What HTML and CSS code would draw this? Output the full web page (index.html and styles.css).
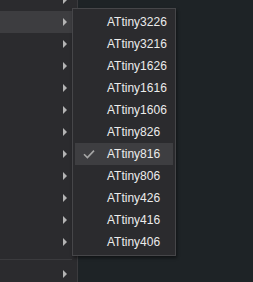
FILE: index.html
```
<!DOCTYPE html>
<html>
  <head>
    <title>Board menu</title>
    <link rel="stylesheet" href="styles.css">
  </head>
  <body>
    <nav class="menu">
      <div class="row"><span class="arrow"></span></div>
      <div class="row active"><span class="arrow"></span></div>
      <div class="row"><span class="arrow"></span></div>
      <div class="row"><span class="arrow"></span></div>
      <div class="row"><span class="arrow"></span></div>
      <div class="row"><span class="arrow"></span></div>
      <div class="row"><span class="arrow"></span></div>
      <div class="row"><span class="arrow"></span></div>
      <div class="row"><span class="arrow"></span></div>
      <div class="row"><span class="arrow"></span></div>
      <div class="row"><span class="arrow"></span></div>
      <div class="row"><span class="arrow"></span></div>
      <div class="sep"></div>
      <div class="row"><span class="arrow"></span></div>
    </nav>

    <ul class="submenu">
      <li>ATtiny3226</li>
      <li>ATtiny3216</li>
      <li>ATtiny1626</li>
      <li>ATtiny1616</li>
      <li>ATtiny1606</li>
      <li>ATtiny826</li>
      <li class="checked">
        <svg viewBox="0 0 12 10" fill="none" stroke="currentColor" stroke-width="1.6">
          <path d="M1 5.2l3.4 3.4L11 1.6" />
        </svg>
        ATtiny816
      </li>
      <li>ATtiny806</li>
      <li>ATtiny426</li>
      <li>ATtiny416</li>
      <li>ATtiny406</li>
    </ul>
  </body>
</html>
```

FILE: styles.css
```
*,
*::after,
*::before {
  margin: 0;
  padding: 0;
  box-sizing: border-box;
}

body {
  width: 253px;
  height: 282px;
  overflow: hidden;
  background-color: #1e2326;
  font-family: "Liberation Sans", Arial, sans-serif;
  font-size: 12px;
  color: #ececec;
}

.menu {
  width: 78px;
  height: 300px;
  margin-top: -11px;
  background-color: #2b2b2e;
  border-right: 1px solid #3b3b3e;
  display: flex;
  flex-direction: column;
}

.row {
  height: 22px;
  display: flex;
  justify-content: flex-end;
  align-items: center;
  padding-right: 10px;
}

.row.active {
  background-color: #3d3d40;
}

.arrow {
  width: 0;
  height: 0;
  border-top: 4px solid transparent;
  border-bottom: 4px solid transparent;
  border-left: 4px solid #b4b4b4;
}

.sep {
  height: 7px;
  border-bottom: 1px solid #3b3b3e;
  margin-bottom: 3px;
  margin-right: 5px;
}

.submenu {
  position: absolute;
  left: 72px;
  top: 8px;
  width: 104px;
  list-style: none;
  background-color: #2b2b2e;
  border: 1px solid #464649;
  padding: 2px;
  box-shadow: 1px 2px 3px rgba(0, 0, 0, 0.45);
}

.submenu li {
  height: 22px;
  display: flex;
  align-items: center;
  padding-left: 32px;
  position: relative;
}

.submenu li.checked {
  background-color: #3e3e41;
}

.submenu svg {
  position: absolute;
  left: 8px;
  top: 6px;
  width: 12px;
  height: 10px;
  color: #a6a6a6;
}
```
